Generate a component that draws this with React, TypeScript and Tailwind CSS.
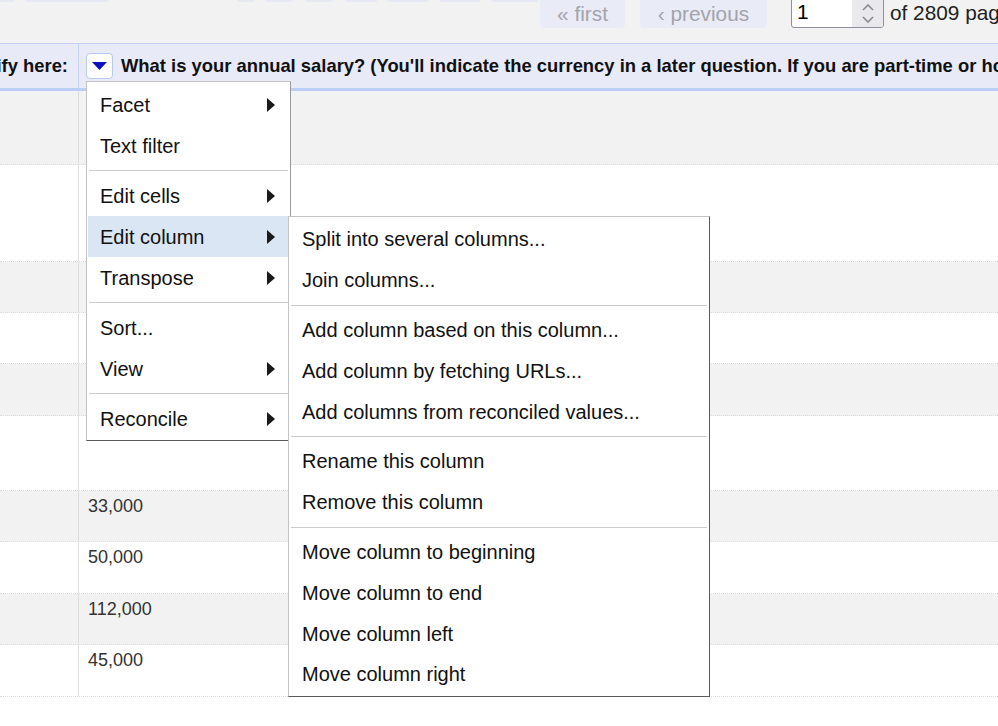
import React from "react";

const rows: { h: string; bg: string; v: string }[] = [
  { h: "h-[74px]", bg: "bg-[#f2f2f2]", v: "" },
  { h: "h-[97px]", bg: "bg-white", v: "" },
  { h: "h-[51px]", bg: "bg-[#f2f2f2]", v: "" },
  { h: "h-[51px]", bg: "bg-white", v: "" },
  { h: "h-[52px]", bg: "bg-[#f2f2f2]", v: "" },
  { h: "h-[75px]", bg: "bg-white", v: "" },
  { h: "h-[51px]", bg: "bg-[#f2f2f2]", v: "33,000" },
  { h: "h-[52px]", bg: "bg-white", v: "50,000" },
  { h: "h-[51px]", bg: "bg-[#f2f2f2]", v: "112,000" },
  { h: "h-[52px]", bg: "bg-white", v: "45,000" },
];

type Item = { label: string; arrow?: boolean; active?: boolean } | "sep";

const mainMenu: Item[] = [
  { label: "Facet", arrow: true },
  { label: "Text filter" },
  "sep",
  { label: "Edit cells", arrow: true },
  { label: "Edit column", arrow: true, active: true },
  { label: "Transpose", arrow: true },
  "sep",
  { label: "Sort..." },
  { label: "View", arrow: true },
  "sep",
  { label: "Reconcile", arrow: true },
];

const subMenu: Item[] = [
  { label: "Split into several columns..." },
  { label: "Join columns..." },
  "sep",
  { label: "Add column based on this column..." },
  { label: "Add column by fetching URLs..." },
  { label: "Add columns from reconciled values..." },
  "sep",
  { label: "Rename this column" },
  { label: "Remove this column" },
  "sep",
  { label: "Move column to beginning" },
  { label: "Move column to end" },
  { label: "Move column left" },
  { label: "Move column right" },
];

function Arrow() {
  return (
    <svg width="8" height="14" viewBox="0 0 8 14" className="shrink-0">
      <polygon points="0,0 8,7 0,14" fill="#1a1a1a" />
    </svg>
  );
}

function MenuList({ items, itemH }: { items: Item[]; itemH: string }) {
  return (
    <>
      {items.map((it, i) =>
        it === "sep" ? (
          <div key={i} className="h-px bg-[#cccccc] my-[4px] mx-[1px]" />
        ) : (
          <div
            key={i}
            className={
              "flex items-center justify-between pl-[12px] pr-[14px] text-[20px] text-[#111] whitespace-nowrap " +
              itemH +
              " " +
              (it.active ? "bg-[#dbe6f5]" : "")
            }
          >
            <span>{it.label}</span>
            {it.arrow ? <Arrow /> : null}
          </div>
        )
      )}
    </>
  );
}

const tabs: string[] = [
  "w-[15px] ml-0",
  "w-[83px] ml-[10px]",
  "w-[18px] ml-[129px]",
  "w-[28px] ml-[10px]",
  "w-[28px] ml-[12px]",
  "w-[32px] ml-[12px]",
  "w-[41px] ml-[10px]",
  "w-[40px] ml-[12px]",
  "w-[46px] ml-[12px]",
];

export default function App() {
  return (
    <div className="relative w-[998px] h-[726px] overflow-hidden bg-white font-['Liberation_Sans',Arial,sans-serif]">
      {/* top bar */}
      <div className="h-[43px] bg-[#f2f2f2] flex items-start">
        <div className="flex items-start w-[540px] shrink-0">
          {tabs.map((t, i) => (
            <div key={i} className={"h-[2px] rounded-b-[3px] bg-[#e6e8f4] shrink-0 " + t} />
          ))}
        </div>
        <div className="w-[85px] h-[28px] rounded-b-[4px] bg-[#e9ebf7] text-[#a3a3ab] text-[20.8px] flex items-center justify-center shrink-0">
          « first
        </div>
        <div className="ml-[15px] w-[127px] h-[28px] rounded-b-[4px] bg-[#e9ebf7] text-[#a3a3ab] text-[20.8px] flex items-center justify-center shrink-0">
          ‹ previous
        </div>
        <div className="ml-[24px] -mt-[4px] w-[93px] h-[32px] border border-[#8f8f9d] rounded-[3px] bg-white flex shrink-0 overflow-hidden">
          <div className="flex-1 pl-[5px] pt-[3px] text-[20.8px] text-black leading-[24px]">1</div>
          <div className="w-[31px] bg-[#e9e9ed] flex flex-col items-center justify-center gap-[5px] pt-[3px]">
            <svg width="12" height="7" viewBox="0 0 12 7">
              <polyline points="1,6 6,1 11,6" fill="none" stroke="#8a8a8a" strokeWidth="1.6" />
            </svg>
            <svg width="12" height="7" viewBox="0 0 12 7">
              <polyline points="1,1 6,6 11,1" fill="none" stroke="#8a8a8a" strokeWidth="1.6" />
            </svg>
          </div>
        </div>
        <div className="ml-[6px] text-[20.8px] text-[#222] whitespace-nowrap leading-[26px]">of 2809 pages</div>
      </div>

      {/* header */}
      <div className="h-[48px] flex border-t border-t-[#c3d0f4] border-b-[3px] border-b-[#bccdf6] bg-[#e8eaf8]">
        <div className="w-[79px] shrink-0 border-r border-r-[#c6d3f4] flex items-center justify-end overflow-hidden pr-[10px]">
          <span className="whitespace-nowrap font-bold text-[18.4px] text-[#111]">
            If your job title needs additional context, please clarify here:
          </span>
        </div>
        <div className="flex-1 flex items-center pl-[7px] overflow-hidden min-w-0">
          <div className="w-[27px] h-[26px] shrink-0 bg-white border border-[#b9c9f1] rounded-[4px] flex items-center justify-center">
            <svg width="15" height="8" viewBox="0 0 15 8">
              <polygon points="0,0 15,0 7.5,8" fill="#1010c0" />
            </svg>
          </div>
          <span className="ml-[8px] whitespace-nowrap font-bold text-[18.4px] text-[#111]">
            What is your annual salary? (You'll indicate the currency in a later question. If you are part-time or hourly, please enter an annualized equivalent -- what you would earn if you worked the job 40 hours a week, 52 weeks a year.)
          </span>
        </div>
      </div>

      {/* rows */}
      <div>
        {rows.map((r, i) => (
          <div key={i} className={"flex box-border border-b border-dotted border-b-[#dcdcdc] " + r.h + " " + r.bg}>
            <div className="w-[79px] shrink-0 border-r border-r-[#dddddd]" />
            <div className="flex-1 pl-[9px] pt-[5px] text-[18px] text-[#333] leading-[21px]">{r.v}</div>
          </div>
        ))}
      </div>

      {/* main menu */}
      <div className="absolute left-[86px] top-[81px] w-[205px] bg-white border border-[#c4c4c4] border-r-[#9a9a9a] border-b-[#5a5a5a] px-[1px] pt-[2px] pb-[1px]">
        <MenuList items={mainMenu} itemH="h-[41px]" />
      </div>

      {/* sub menu */}
      <div className="absolute left-[288px] top-[216px] w-[422px] bg-white border border-[#c4c4c4] border-r-[#5a5a5a] border-b-[#5a5a5a] px-[1px] pt-[2px] pb-[1px]">
        <MenuList items={subMenu} itemH="h-[40.8px]" />
      </div>
    </div>
  );
}
